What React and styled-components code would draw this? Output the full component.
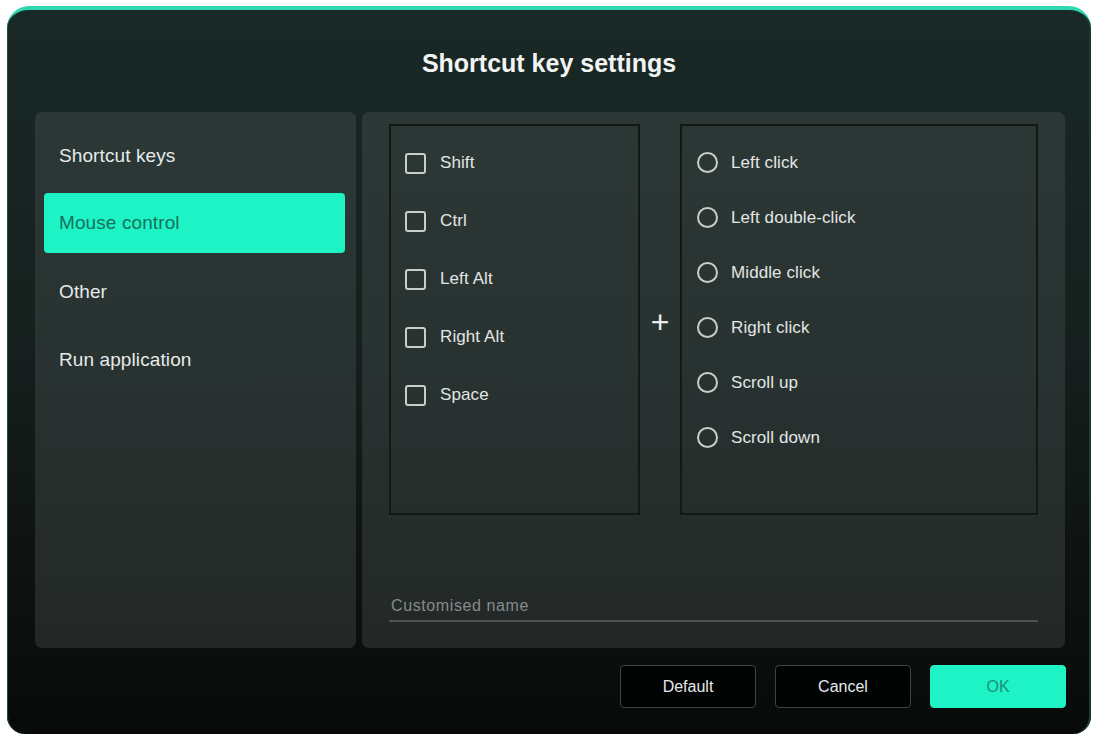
import React from "react";
import styled, { createGlobalStyle } from "styled-components";

const modifiers = ["Shift", "Ctrl", "Left Alt", "Right Alt", "Space"];
const actions = [
  "Left click",
  "Left double-click",
  "Middle click",
  "Right click",
  "Scroll up",
  "Scroll down",
];
const menu = ["Shortcut keys", "Mouse control", "Other", "Run application"];

function App() {
  return (
    <>
      <GlobalStyle />
      <Dialog>
        <Title>Shortcut key settings</Title>
        <Body>
          <SidePanel>
            {menu.map((item) => (
              <MenuItem key={item} $active={item === "Mouse control"}>
                {item}
              </MenuItem>
            ))}
          </SidePanel>
          <MainPanel>
            <Lists>
              <KeyBox>
                {modifiers.map((m) => (
                  <KeyRow key={m}>
                    <Check />
                    <Label>{m}</Label>
                  </KeyRow>
                ))}
              </KeyBox>
              <Plus>+</Plus>
              <ActionBox>
                {actions.map((a) => (
                  <ActionRow key={a}>
                    <Radio />
                    <Label>{a}</Label>
                  </ActionRow>
                ))}
              </ActionBox>
            </Lists>
            <NameInput placeholder="Customised name" />
          </MainPanel>
        </Body>
        <Footer>
          <Button>Default</Button>
          <Button>Cancel</Button>
          <Button $primary>OK</Button>
        </Footer>
      </Dialog>
    </>
  );
}

export default App;

const GlobalStyle = createGlobalStyle`
  body {
    margin: 0;
    background: #ffffff;
    font-family: "Liberation Sans", Arial, sans-serif;
  }
`;

const Dialog = styled.div`
  box-sizing: border-box;
  margin: 6px 4px 0 7px;
  width: 1084px;
  height: 728px;
  display: flex;
  flex-direction: column;
  border-top: 4px solid #2fd8b1;
  border-radius: 22px 22px 18px 18px;
  background: linear-gradient(180deg, #192926 0%, #16201e 45%, #0d1110 80%, #080a0a 100%);
  box-shadow: inset 1px 0 0 #1f4a40, inset -2px 0 0 #1b3a34;
  overflow: hidden;
`;

const Title = styled.h1`
  margin: 0;
  height: 102px;
  display: flex;
  align-items: center;
  justify-content: center;
  padding-top: 4px;
  box-sizing: border-box;
  color: #f2f4f4;
  font-size: 25px;
  font-weight: bold;
`;

const Body = styled.div`
  display: flex;
  gap: 6px;
  padding: 0 26px 0 28px;
  height: 536px;
`;

const SidePanel = styled.div`
  box-sizing: border-box;
  width: 321px;
  padding: 13px 11px 0 9px;
  display: flex;
  flex-direction: column;
  gap: 8px;
  border-radius: 7px;
  background: linear-gradient(180deg, #2c3836 0%, #283230 50%, #232827 100%);
`;

const MenuItem = styled.div`
  height: 60px;
  display: flex;
  align-items: center;
  padding-left: 15px;
  padding-top: ${(p) => (p.$active ? "0" : "2px")};
  box-sizing: border-box;
  border-radius: 4px;
  font-size: 19px;
  letter-spacing: 0.1px;
  color: ${(p) => (p.$active ? "#16705c" : "#e6eaea")};
  background: ${(p) => (p.$active ? "#1ef3c6" : "transparent")};
`;

const MainPanel = styled.div`
  box-sizing: border-box;
  flex: 1;
  padding: 12px 27px 26px 27px;
  display: flex;
  flex-direction: column;
  justify-content: space-between;
  border-radius: 7px;
  background: linear-gradient(180deg, #2c3836 0%, #283230 50%, #232827 100%);
`;

const Lists = styled.div`
  display: flex;
  height: 391px;
`;

const Box = styled.div`
  box-sizing: border-box;
  border: 2px solid #131817;
  display: flex;
  flex-direction: column;
`;

const KeyBox = styled(Box)`
  width: 251px;
  padding: 8px 0 0 14px;
`;

const ActionBox = styled(Box)`
  width: 358px;
  padding: 9px 0 0 15px;
`;

const Plus = styled.div`
  width: 40px;
  display: flex;
  align-items: center;
  justify-content: center;
  color: #e8ecec;
  font-size: 32px;
  font-weight: 300;
  padding-top: 6px;
`;

const KeyRow = styled.div`
  height: 58px;
  display: flex;
  align-items: center;
  gap: 14px;
`;

const ActionRow = styled.div`
  height: 55px;
  display: flex;
  align-items: center;
  gap: 13px;
`;

const Check = styled.span`
  box-sizing: border-box;
  width: 21px;
  height: 21px;
  border: 2px solid #c9cdcc;
  border-radius: 3px;
`;

const Radio = styled.span`
  box-sizing: border-box;
  width: 21px;
  height: 21px;
  border: 2px solid #c9cdcc;
  border-radius: 50%;
`;

const Label = styled.span`
  color: #e2e6e5;
  font-size: 17px;
  letter-spacing: 0.1px;
`;

const NameInput = styled.input`
  box-sizing: border-box;
  width: 649px;
  height: 34px;
  padding: 4px 0 0 2px;
  border: none;
  border-bottom: 2px solid #4c5352;
  background: transparent;
  font-family: "Liberation Sans", Arial, sans-serif;
  font-size: 16px;
  letter-spacing: 0.6px;
  color: #e2e6e5;
  outline: none;
  &::placeholder {
    color: #868c8b;
  }
`;

const Footer = styled.div`
  display: flex;
  justify-content: flex-end;
  gap: 19px;
  padding: 17px 25px 0 0;
`;

const Button = styled.button`
  width: 136px;
  height: 43px;
  border-radius: 4px;
  border: 1px solid ${(p) => (p.$primary ? "#1ef3c6" : "#3e4443")};
  background: ${(p) => (p.$primary ? "#1ef3c6" : "#020303")};
  color: ${(p) => (p.$primary ? "#1c8f76" : "#e6eaea")};
  font-family: "Liberation Sans", Arial, sans-serif;
  font-size: 16px;
  font-weight: 500;
`;
